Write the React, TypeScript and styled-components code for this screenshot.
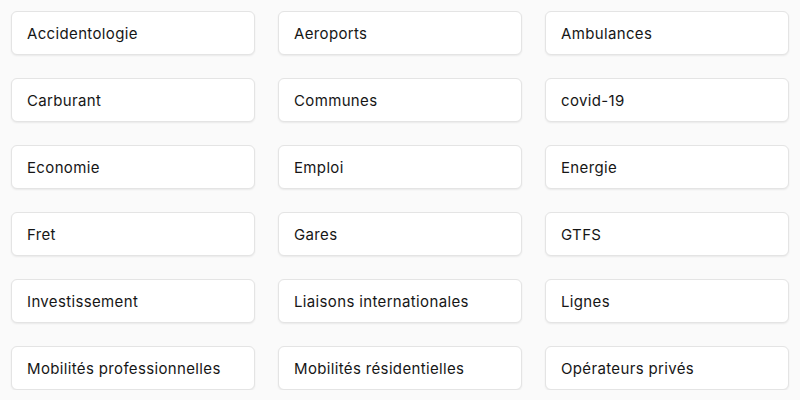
import React from "react";
import styled, { createGlobalStyle } from "styled-components";

const Global = createGlobalStyle`
  html, body { margin: 0; padding: 0; background: #fafafa; }
  body { font-family: Inter, "Noto Sans", sans-serif; }
`;

const Grid = styled.div`
  display: grid;
  grid-template-columns: repeat(3, 1fr);
  column-gap: 23px;
  row-gap: 23px;
  padding: 11px 11px 0 11px;
`;

const Card = styled.a`
  display: flex;
  align-items: center;
  height: 44px;
  box-sizing: border-box;
  padding: 0 15px;
  background: #ffffff;
  border: 1px solid #e4e4e4;
  border-radius: 6px;
  box-shadow: 0 1px 2px rgba(0, 0, 0, 0.07);
  color: #161616;
  font-size: 15px;
  font-weight: 400;
  letter-spacing: 0.35px;
  text-decoration: none;
`;

const items = [
  "Accidentologie", "Aeroports", "Ambulances",
  "Carburant", "Communes", "covid-19",
  "Economie", "Emploi", "Energie",
  "Fret", "Gares", "GTFS",
  "Investissement", "Liaisons internationales", "Lignes",
  "Mobilités professionnelles", "Mobilités résidentielles", "Opérateurs privés",
];

export default function App() {
  return (
    <>
      <Global />
      <Grid>
        {items.map((t) => (
          <Card key={t}>{t}</Card>
        ))}
      </Grid>
    </>
  );
}
